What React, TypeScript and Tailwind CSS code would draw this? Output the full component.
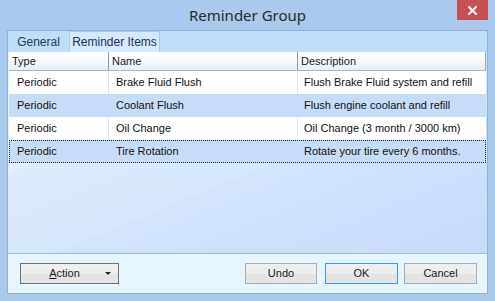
import React from "react";

const rows = [
  { type: "Periodic", name: "Brake Fluid Flush", desc: "Flush Brake Fluid system and refill", sel: false },
  { type: "Periodic", name: "Coolant Flush", desc: "Flush engine coolant and refill", sel: true },
  { type: "Periodic", name: "Oil Change", desc: "Oil Change (3 month / 3000 km)", sel: false },
  { type: "Periodic", name: "Tire Rotation", desc: "Rotate your tire every 6 months.", sel: true, focus: true },
];

function Btn({ children, className = "" }: { children: React.ReactNode; className?: string }) {
  return (
    <div
      className={
        "h-[21px] flex items-center justify-center border bg-[linear-gradient(#f0f0f0_0%,#ececec_50%,#e3e3e3_51%,#e5e5e5_100%)] text-[11px] text-[#1a1a1a] " +
        className
      }
    >
      {children}
    </div>
  );
}

export default function App() {
  return (
    <div
      className="w-[495px] h-[301px] bg-[#aac9ed] flex flex-col overflow-hidden"
      style={{ fontFamily: '"Liberation Sans", Arial, sans-serif' }}
    >
      {/* title bar */}
      <div className="relative h-[30px] flex items-center justify-center">
        <span
          className="text-[15px] text-[#2b2b2b] pt-[1px]"
          style={{ fontFamily: '"Noto Sans", "Open Sans", sans-serif' }}
        >
          Reminder Group
        </span>
        <div className="absolute right-[7px] top-0 w-[31px] h-[20px] bg-[#c75050] flex items-center justify-center">
          <svg width="9" height="9" viewBox="0 0 9 9">
            <path d="M1 1 L8 8 M8 1 L1 8" stroke="#fff" strokeWidth="2" strokeLinecap="square" />
          </svg>
        </div>
      </div>

      {/* client */}
      <div className="ml-[7px] w-[481px] h-[264px] border border-[#8eb2da] flex flex-col">
        {/* tab strip */}
        <div className="h-[21px] bg-[#c1ddf8] flex items-end shrink-0">
          <div className="w-[61px] h-[20px] flex items-center justify-center text-[12px] text-[#1e3a64]">
            General
          </div>
          <div className="w-[91px] h-[21px] flex items-center justify-center text-[12px] text-[#2a2a5a] bg-[#d5eafc] border border-b-0 border-[#a6cbee] rounded-t-[2px]">
            Reminder Items
          </div>
        </div>

        {/* tab page */}
        <div className="h-[202px] shrink-0 px-[1px] bg-[linear-gradient(158deg,#e7f7ff_0%,#e3f3ff_30%,#dcecfd_31%,#d8e8fc_55%,#d3e4fb_56%,#ccdefa_80%,#c6dbf9_100%)] border-b border-[#9bc0e6]">
          {/* header */}
          <div className="h-[19px] flex text-[11px] text-[#1a1a1a] bg-[linear-gradient(#ffffff_0%,#f6f9fd_50%,#e6eef8_100%)] border-b border-[#a8b8cc]">
            <div className="w-[100px] border-r border-[#8f9aa8] flex items-center pl-[3px]">Type</div>
            <div className="w-[189px] border-r border-[#8f9aa8] flex items-center pl-[3px]">Name</div>
            <div className="flex-1 flex items-center pl-[3px] border-r border-[#9aa6b4]">Description</div>
          </div>
          {rows.map((r, i) => (
            <div
              key={i}
              className={
                "h-[23px] flex text-[11px] text-[#111] " +
                (r.sel ? "bg-[#c6ddf8] " : "bg-white ") +
                (r.focus ? "outline-1 outline-dotted outline-[#222] -outline-offset-1" : "")
              }
            >
              <div className={"w-[100px] flex items-center pl-[8px] border-r " + (r.sel ? "border-transparent" : "border-[#dbe8f6]")}>
                {r.type}
              </div>
              <div className={"w-[189px] flex items-center pl-[7px] border-r " + (r.sel ? "border-transparent" : "border-[#dbe8f6]")}>
                {r.name}
              </div>
              <div className="flex-1 flex items-center pl-[6px]">{r.desc}</div>
            </div>
          ))}
        </div>

        {/* buttons */}
        <div className="flex-1 bg-[#e6f5fe] flex items-start pt-[9px] pl-[12px]">
          <Btn className="w-[99px] border-[#707070] relative">
            <span className="pr-[10px]">
              <span className="underline">A</span>ction
            </span>
            <span className="absolute right-[7px] top-[8px] w-0 h-0 border-l-[3px] border-r-[3px] border-t-[3px] border-l-transparent border-r-transparent border-t-[#222]" />
          </Btn>
          <Btn className="w-[72px] ml-[126px] border-[#acacac]">Undo</Btn>
          <Btn className="w-[73px] ml-[8px] border-[#3399ff]">OK</Btn>
          <Btn className="w-[73px] ml-[6px] border-[#acacac]">Cancel</Btn>
        </div>
      </div>
    </div>
  );
}
